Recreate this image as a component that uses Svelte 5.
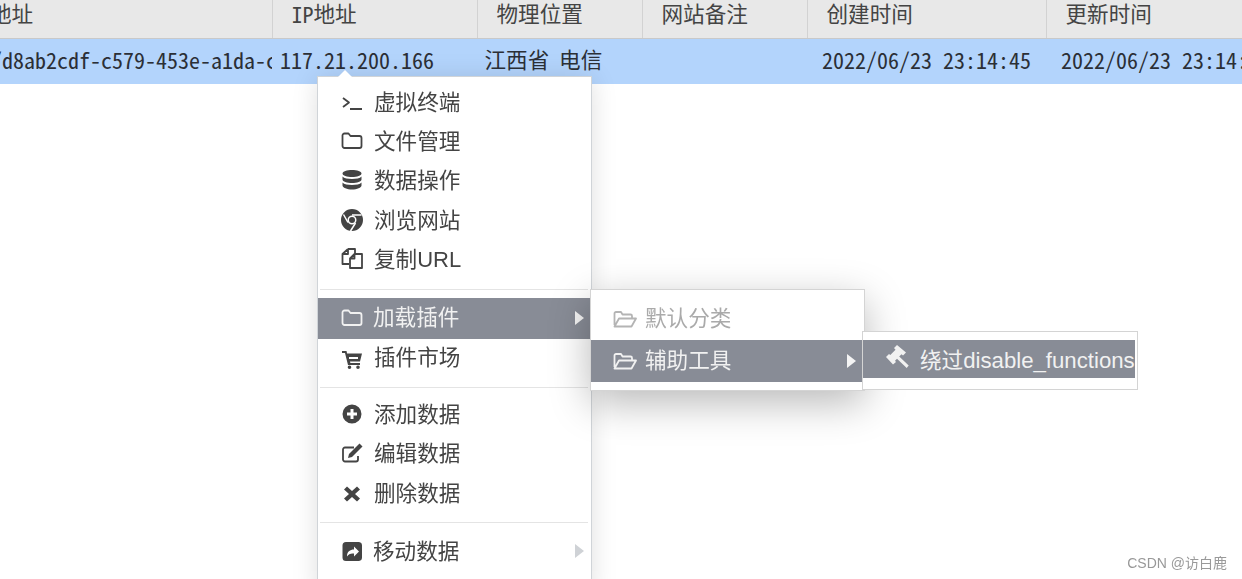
<script>
  const headers = [
    { t: '地址', c: 'h0' }, { t: 'IP地址' }, { t: '物理位置' }, { t: '网站备注' }, { t: '创建时间' }, { t: '更新时间' }
  ];
  const icons = {
    terminal: [{ s: 'M3 8l6 4.500-6 4.500M10 19h12' }],
    folder: [{ s: 'M2.500 6.500a2 2 0 0 1 2-2h4l2 2.500h9a2 2 0 0 1 2 2v8a2 2 0 0 1-2 2h-15a2 2 0 0 1-2-2z' }],
    open: [{ s: 'M1.500 18V6.500A1.500 1.500 0 0 1 3 5h5l1.500 2.500h8A1.500 1.500 0 0 1 19 9v2.500M1.500 19.500l4.500-8h17l-4.500 8z' }],
    db: [{ f: 'M12 2c5 0 9.500 1.200 9.500 3.500S17 9 12 9 2.500 7.800 2.500 5.500 7 2 12 2zM2.500 8.500C4 10.300 8 11 12 11s8-.7 9.500-2.500v3C21.500 13.800 17 15 12 15s-9.500-1.200-9.500-3.500zM2.500 14.500C4 16.300 8 17 12 17s8-.7 9.500-2.500v3C21.500 19.800 17 21.500 12 21.500s-9.500-1.700-9.500-4z' }],
    chrome: [{ f: 'M12 1a11 11 0 1 1 0 22 11 11 0 0 1 0-22zm0 6.500a4.500 4.500 0 1 0 0 9 4.500 4.500 0 0 0 0-9z' }, { f: 'M12 9a3 3 0 1 1 0 6 3 3 0 0 1 0-6z' }, { w: 'M12 7h9.500M8 14.500L3.500 6.500M15.500 15l-5 8' }],
    copy: [{ s: 'M8 2h7v5M8 2L2.500 7v10h6.500M8 2v5H2.500M14.500 7H22v14H10V11.500zM14.500 7v4.500H10' }],
    cart: [{ f: 'M2 4h4.500l.6 2.500H22l-2 8H10l.4 1.500H20v2H8L5 6H2zM9 10v2h9v-2zM9.500 18.500a1.800 1.800 0 1 1 0 3.600 1.800 1.800 0 0 1 0-3.600zM18 18.500a1.800 1.800 0 1 1 0 3.600 1.800 1.800 0 0 1 0-3.600z' }],
    plus: [{ f: 'M12 2.500a9.500 9.500 0 1 1 0 19 9.500 9.500 0 0 1 0-19zM10.500 7v3.500H7v3h3.500V17h3v-3.500H17v-3h-3.500V7z' }],
    edit: [{ s: 'M18 15v3.500A2 2 0 0 1 16 20.500H5a2 2 0 0 1-2-2V8.500a2 2 0 0 1 2-2h9' }, { f: 'M19.500 2.500l3 3L12 16l-4 1 1-4z' }],
    times: [{ f: 'M7 5.500l5 4.500 5-4.500 3 3-5 4.500 5 4.500-3 3-5-4.500-5 4.500-3-3 5-4.500-5-4.500z' }],
    share: [{ f: 'M6 3h13a3.500 3.500 0 0 1 3 3.500v12a3.500 3.500 0 0 1-3 3.500H6a3.500 3.500 0 0 1-3.500-3.500v-12A3.500 3.500 0 0 1 6 3zm8 4.500v3c-4 0-7 2-7 7 1.500-2.500 4-3.500 7-3v3l5-5z' }],
    gavel: [{ f: 'M11 1l9 7.500-3 3-1.500-1.300-2.300 2.300 9.500 9-2 2.500-9.700-9.300-2 2 1 1.300-3 2.400L0 13l3-3 1.300 1 5.200-5.200L8 4z' }]
  };
  const group1 = [
    ['terminal', '虚拟终端'], ['folder', '文件管理'], ['db', '数据操作'], ['chrome', '浏览网站']
  ];
  const group3 = [['plus', '添加数据'], ['edit', '编辑数据'], ['times', '删除数据']];
</script>

{#snippet icon(name)}
  <svg class="icon" viewBox="0 0 24 24" aria-hidden="true">
    {#each icons[name] as p}
      {#if p.f}<path d={p.f} fill="currentColor" fill-rule="evenodd" />{/if}
      {#if p.s}<path d={p.s} fill="none" stroke="currentColor" stroke-width="1.800" stroke-linejoin="round" />{/if}
      {#if p.w}<path d={p.w} fill="none" stroke="#fff" stroke-width="1.500" />{/if}
    {/each}
  </svg>
{/snippet}

{#snippet item(name, label)}
  <div class="item">{@render icon(name)}<span>{label}</span></div>
{/snippet}

<div class="page">
  <div class="thead">
    {#each headers as h}
      <div class="th {h.c ?? ''}">{#if h.t === 'IP地址'}<span class="lat">IP</span>地址{:else}{h.t}{/if}</div>
    {/each}
  </div>
  <div class="row">
    <div class="td lc c0"><span class="lat uuid">/d8ab2cdf-c579-453e-a1da-c0f1</span></div>
    <div class="td lc c1"><span class="lat">117.21.200.166</span></div>
    <div class="td c2">江西省 电信</div>
    <div class="td"></div>
    <div class="td lc c4"><span class="lat">2022/06/23 23:14:45</span></div>
    <div class="td lc c4"><span class="lat">2022/06/23 23:14:45</span></div>
  </div>

  <div class="menu main">
    {#each group1 as g}{@render item(g[0], g[1])}{/each}
    <div class="item">{@render icon('copy')}<span>复制<span class="url">URL</span></span></div>
    <div class="divider first"></div>
    <div class="item active tall tight">{@render icon('folder')}<span>加载插件</span><i class="arrow"></i></div>
    <div class="item raised">{@render icon('cart')}<span>插件市场</span></div>
    <div class="divider second"></div>
    {#each group3 as g}{@render item(g[0], g[1])}{/each}
    <div class="divider"></div>
    <div class="item tight">{@render icon('share')}<span>移动数据</span><i class="arrow muted"></i></div>
    <div class="item">{@render icon('folder')}<span>清除缓存</span></div>
  </div>
  <i class="notch"></i>

  <div class="menu sub1">
    <div class="item off sub">{@render icon('open')}<span>默认分类</span></div>
    <div class="item active sub">{@render icon('open')}<span>辅助工具</span><i class="arrow"></i></div>
  </div>

  <div class="menu sub2">
    <div class="item active bypass">{@render icon('gavel')}<span>绕过<span class="fn">disable_functions</span></span></div>
  </div>

  <div class="mark">CSDN @访白鹿</div>
</div>

<style>
  :global(body) { margin: 0; background: #fff; }
  .page {
    position: relative;
    height: 579px;
    overflow: hidden;
    font-family: "Noto Sans CJK SC", sans-serif;
    font-size: 21.6px;
    color: #333;
    filter: blur(0.4px);
  }
  .thead, .row {
    display: grid;
    grid-template-columns: 272px 205px 165px 165px 239px 1fr;
  }
  .thead {
    height: 38px;
    background: #e8e8e8;
    border-bottom: 1px solid #c9c9c9;
  }
  .th {
    display: flex;
    align-items: center;
    padding: 0 0 12px 18.500px;
    border-left: 1px solid #d2d2d2;
    color: #444;
    white-space: nowrap;
    overflow: hidden;
    line-height: 26px;
  }
  .th.h0 { border-left: 0; padding-left: 0; text-indent: -10px; }
  .row {
    height: 45px;
    background: #b3d4fc;
    color: #2b2f36;
  }
  .td {
    display: flex;
    align-items: center;
    white-space: nowrap;
    overflow: hidden;
    padding-bottom: 1px;
  }
  .td.lc { padding-bottom: 5px; }
  .c0 { padding-left: 0; }
  .c1 { padding-left: 8px; }
  .c2 { padding-left: 7.500px; padding-bottom: 6px; word-spacing: 5px; }
  .c4 { padding-left: 15px; }
  .lat {
    font-family: "Noto Sans CJK SC", monospace;
    font-feature-settings: "hwid";
    font-size: 22px;
  }
  .uuid { margin-left: -9px; }

  .menu {
    position: absolute;
    box-sizing: border-box;
    background: #fff;
    color: #444;
  }
  .main {
    left: 317px;
    top: 76px;
    width: 275px;
    height: 520px;
    padding-top: 5px;
    border: 1px solid #d0d4d8;
    box-shadow: 0 2px 24px rgba(0, 0, 0, 0.13);
  }
  .notch {
    position: absolute;
    left: 338px;
    top: 70px;
    border: 7px solid transparent;
    border-top: 0;
    border-bottom-color: #fff;
  }
  .item {
    display: flex;
    align-items: center;
    height: 39.4px;
    padding-left: 22px;
    white-space: nowrap;
    overflow: hidden;
  }
  .item > span { margin-left: 10px; margin-bottom: 3px; }
  .icon { flex: none; width: 24px; height: 24px; color: #444; }
  .tall { height: 41px; }
  .item.tight > span { margin-left: 9px; }
  .item.tall > span { margin-bottom: 5px; }
  .item.raised > span { margin-bottom: 6px; }
  .active { background: #888c96; color: #f1f1f1; }
  .active .icon { color: #f1f1f1; }
  .divider {
    height: 1px;
    margin: 9px 3px 9px 2px;
    background: #e4e4e4;
  }
  .divider.first { margin-top: 10px; margin-bottom: 8px; }
  .divider.second { margin-bottom: 6px; }
  .arrow {
    margin-left: auto;
    margin-right: 7px;
    border: 7px solid transparent;
    border-right: 0;
    border-left: 9px solid #f4f4f4;
    height: 0;
  }
  .arrow.muted { border-left-color: #cfd2d6; }
  .url { font-family: "Liberation Sans", sans-serif; font-size: 22px; }

  .sub1 {
    left: 590px;
    top: 289px;
    width: 275px;
    height: 102px;
    padding-top: 8px;
    border: 1px solid #d4d4d4;
    box-shadow: 0 12px 40px rgba(0, 0, 0, 0.28);
  }
  .item.sub { height: 42px; padding-left: 22px; }
  .item.sub > span { margin-left: 8px; margin-bottom: 6px; }
  .sub .arrow { margin-right: 8px; }
  .off { color: #aaa; }
  .off .icon { color: #b4b4b4; }

  .sub2 {
    left: 862px;
    top: 331px;
    width: 276px;
    height: 59px;
    padding: 8px 2px 0 0;
    border: 1px solid #d4d4d4;
  }
  .item.bypass { height: 38px; padding-left: 23px; }
  .item.bypass > span { margin-left: 10px; margin-bottom: 2px; }
  .bypass .icon { margin-top: -6px; }
  .fn { font-family: "Liberation Sans", sans-serif; font-size: 22.2px; }

  .mark {
    position: absolute;
    right: 15px;
    bottom: 8px;
    font-size: 14px;
    line-height: 16px;
    color: #999;
    font-family: "Liberation Sans", "Noto Sans CJK SC", sans-serif;
  }
</style>
